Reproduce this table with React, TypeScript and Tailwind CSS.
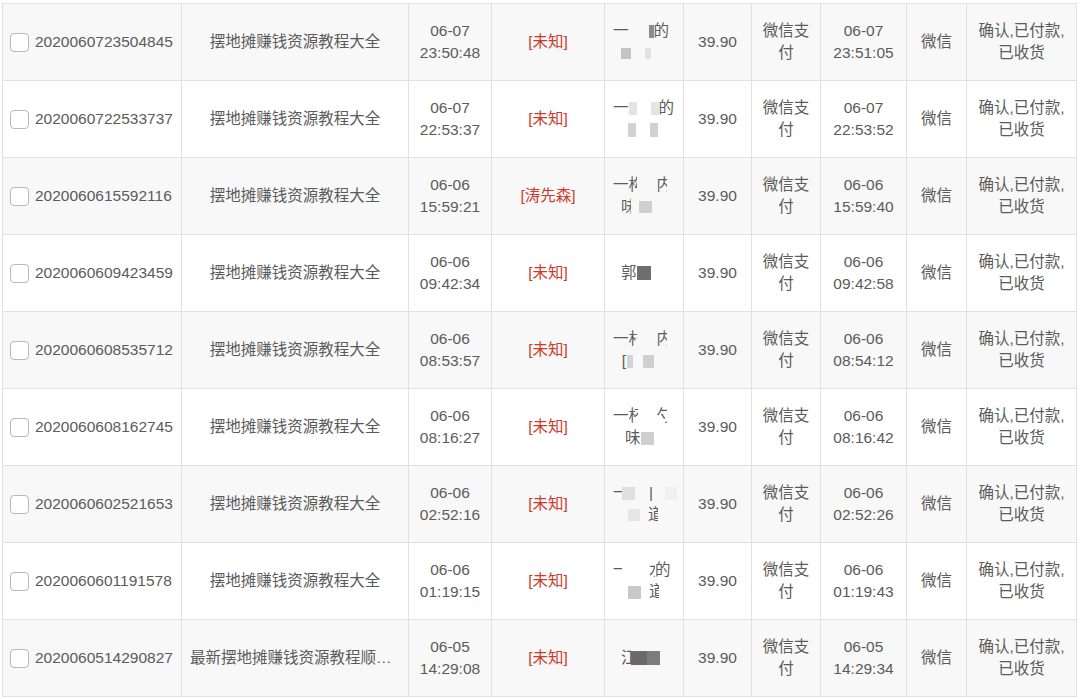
import React from "react";

type Row = {
  id: string;
  product: string;
  date: string;
  time: string;
  tag: string;
  name: React.ReactNode;
  pdate: string;
  ptime: string;
};

const B = ({ c = "bg-[#c4c4c4]", w = "w-[10px]", h = "h-[12px]" }: { c?: string; w?: string; h?: string }) => (
  <span className={`inline-block align-middle ${c} ${w} ${h}`} />
);

const Gap = ({ w = "w-[14px]" }: { w?: string }) => <span className={`inline-block ${w}`} />;

const rows: Row[] = [
  {
    id: "2020060723504845", product: "摆地摊赚钱资源教程大全", date: "06-07", time: "23:50:48", tag: "[未知]",
    name: (<><div className="flex items-center"><span>一</span><Gap w="w-[20px]" /><B c="bg-[#8c8c8c]" w="w-[5px]" h="h-[13px]" /><span>的</span></div><div className="flex items-center h-[22px]"><Gap w="w-[8px]" /><B w="w-[10px]" h="h-[11px]" /><Gap w="w-[14px]" /><B c="bg-[#e2e2e2]" w="w-[6px]" h="h-[11px]" /></div></>),
    pdate: "06-07", ptime: "23:51:05",
  },
  {
    id: "2020060722533737", product: "摆地摊赚钱资源教程大全", date: "06-07", time: "22:53:37", tag: "[未知]",
    name: (<><div className="flex items-center"><span>一</span><B c="bg-[#e4e4e4]" w="w-[8px]" h="h-[13px]" /><Gap w="w-[14px]" /><B c="bg-[#e4e4e4]" w="w-[8px]" h="h-[13px]" /><span>的</span></div><div className="flex items-center h-[22px]"><Gap w="w-[15px]" /><B c="bg-[#d2d2d2]" w="w-[8px]" h="h-[14px]" /><Gap w="w-[14px]" /><B c="bg-[#d2d2d2]" w="w-[8px]" h="h-[14px]" /></div></>),
    pdate: "06-07", ptime: "22:53:52",
  },
  {
    id: "2020060615592116", product: "摆地摊赚钱资源教程大全", date: "06-06", time: "15:59:21", tag: "[涛先森]",
    name: (<><div className="flex items-center"><span>一</span><span className="inline-block w-[8px] overflow-hidden">构</span><Gap w="w-[20px]" /><span className="inline-block w-[10px] overflow-hidden">内</span></div><div className="flex items-center h-[22px]"><Gap w="w-[8px]" /><span className="inline-block w-[10px] overflow-hidden">味</span><Gap w="w-[8px]" /><B c="bg-[#cfcfcf]" w="w-[13px]" h="h-[12px]" /></div></>),
    pdate: "06-06", ptime: "15:59:40",
  },
  {
    id: "2020060609423459", product: "摆地摊赚钱资源教程大全", date: "06-06", time: "09:42:34", tag: "[未知]",
    name: (<div className="flex items-center"><Gap w="w-[8px]" /><span>郭</span><B c="bg-[#6e6e6e]" w="w-[14px]" h="h-[14px]" /></div>),
    pdate: "06-06", ptime: "09:42:58",
  },
  {
    id: "2020060608535712", product: "摆地摊赚钱资源教程大全", date: "06-06", time: "08:53:57", tag: "[未知]",
    name: (<><div className="flex items-center"><span>一</span><span className="inline-block w-[8px] overflow-hidden">村</span><Gap w="w-[20px]" /><span className="inline-block w-[10px] overflow-hidden">内</span></div><div className="flex items-center h-[22px]"><Gap w="w-[8px]" /><span className="inline-block w-[6px] overflow-hidden">[</span><B c="bg-[#d4d4d4]" w="w-[6px]" h="h-[13px]" /><Gap w="w-[10px]" /><B c="bg-[#d0d0d0]" w="w-[11px]" h="h-[13px]" /></div></>),
    pdate: "06-06", ptime: "08:54:12",
  },
  {
    id: "2020060608162745", product: "摆地摊赚钱资源教程大全", date: "06-06", time: "08:16:27", tag: "[未知]",
    name: (<><div className="flex items-center"><span>一</span><span className="inline-block w-[9px] overflow-hidden">杯</span><Gap w="w-[19px]" /><span className="inline-block w-[10px] overflow-hidden">勺</span></div><div className="flex items-center h-[22px]"><Gap w="w-[12px]" /><span>味</span><B c="bg-[#cfcfcf]" w="w-[13px]" h="h-[13px]" /></div></>),
    pdate: "06-06", ptime: "08:16:42",
  },
  {
    id: "2020060602521653", product: "摆地摊赚钱资源教程大全", date: "06-06", time: "02:52:16", tag: "[未知]",
    name: (<><div className="flex items-center"><span className="inline-block w-[9px] overflow-hidden">一</span><B c="bg-[#e0e0e0]" w="w-[13px]" h="h-[13px]" /><Gap w="w-[14px]" /><span className="inline-block w-[4px] overflow-hidden">|</span><Gap w="w-[12px]" /><B c="bg-[#f0f0f0]" w="w-[12px]" h="h-[13px]" /></div><div className="flex items-center h-[22px]"><Gap w="w-[15px]" /><B c="bg-[#e6e6e6]" w="w-[12px]" h="h-[12px]" /><Gap w="w-[8px]" /><span className="inline-block w-[10px] overflow-hidden">道</span></div></>),
    pdate: "06-06", ptime: "02:52:26",
  },
  {
    id: "2020060601191578", product: "摆地摊赚钱资源教程大全", date: "06-06", time: "01:19:15", tag: "[未知]",
    name: (<><div className="flex items-center"><span className="inline-block w-[9px] overflow-hidden">一</span><Gap w="w-[27px]" /><span className="inline-block w-[6px] overflow-hidden">水</span><span>的</span></div><div className="flex items-center h-[22px]"><Gap w="w-[15px]" /><B c="bg-[#c8c8c8]" w="w-[13px]" h="h-[13px]" /><Gap w="w-[8px]" /><span className="inline-block w-[10px] overflow-hidden">道</span></div></>),
    pdate: "06-06", ptime: "01:19:43",
  },
  {
    id: "2020060514290827", product: "最新摆地摊赚钱资源教程顺丰包邮全套", date: "06-05", time: "14:29:08", tag: "[未知]",
    name: (<div className="flex items-center"><Gap w="w-[8px]" /><span className="inline-block w-[10px] overflow-hidden">江</span><B c="bg-[#6a6a6a]" w="w-[16px]" h="h-[14px]" /><B c="bg-[#7c7c7c]" w="w-[13px]" h="h-[14px]" /></div>),
    pdate: "06-05", ptime: "14:29:34",
  },
];

const cell = "border-r border-b border-[#e1e1e1] h-[77px] flex items-center justify-center text-center";

export default function App() {
  return (
    <div
      className="w-[1080px] h-[699px] bg-white pt-[3px] pl-[2px] overflow-hidden text-[15.5px] leading-[22px] text-[#5b5b5b]"
      style={{ fontFamily: '"Liberation Sans", "Noto Sans CJK SC", sans-serif' }}
    >
      <div className="grid grid-cols-[179px_227px_83px_113px_79px_68px_69px_86px_60px_110px] w-[1075px] border-t border-l border-[#e1e1e1]">
        {rows.map((r, i) => {
          const bg = i % 2 === 0 ? "bg-[#f8f8f8]" : "bg-white";
          const last = i === rows.length - 1;
          return (
            <React.Fragment key={r.id}>
              <div className={`${cell} ${bg} justify-start pl-[7px]`}>
                <span className="inline-block w-[19px] h-[19px] rounded-[4px] border border-[#b9b9b9] bg-white mr-[6px] shrink-0" />
                <span>{r.id}</span>
              </div>
              <div className={`${cell} ${bg} ${last ? "justify-start pl-[8px] pr-[8px]" : ""}`}>
                <span className={last ? "block truncate text-left" : ""}>{r.product}</span>
              </div>
              <div className={`${cell} ${bg} flex-col`}>
                <span>{r.date}</span>
                <span>{r.time}</span>
              </div>
              <div className={`${cell} ${bg} text-[#cc3b2c]`}>{r.tag}</div>
              <div className={`${cell} ${bg} flex-col items-start pl-[8px]`}>
                <div className="flex flex-col text-[#5b5b5b]">{r.name}</div>
              </div>
              <div className={`${cell} ${bg}`}>39.90</div>
              <div className={`${cell} ${bg} flex-col`}>
                <span>微信支</span>
                <span>付</span>
              </div>
              <div className={`${cell} ${bg} flex-col`}>
                <span>{r.pdate}</span>
                <span>{r.ptime}</span>
              </div>
              <div className={`${cell} ${bg}`}>微信</div>
              <div className={`${cell} ${bg} flex-col`}>
                <span>确认,已付款,</span>
                <span>已收货</span>
              </div>
            </React.Fragment>
          );
        })}
      </div>
    </div>
  );
}
